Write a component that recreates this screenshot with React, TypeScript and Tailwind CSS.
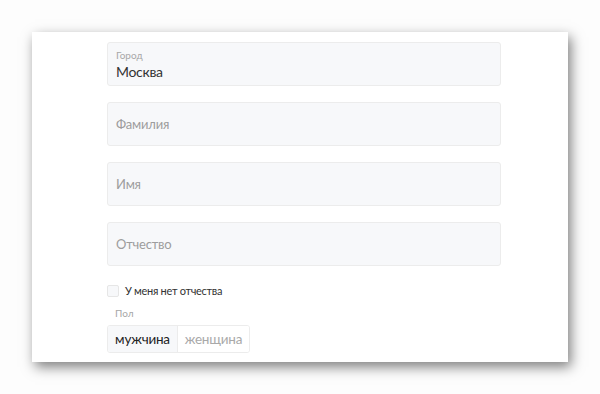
import type { ReactNode } from "react";

const font = { fontFamily: "Lato, Roboto, sans-serif" };

function Field({ placeholder }: { placeholder: string }) {
  return (
    <div className="flex h-[44px] w-[394px] items-center rounded-[3px] border border-[#ececec] bg-[#f7f8fa] px-[8px] pt-[1px]">
      <span className="text-[13px] tracking-[-0.2px] text-[#9d9d9d]">{placeholder}</span>
    </div>
  );
}

function Segment({ active, children }: { active?: boolean; children: ReactNode }) {
  return (
    <div
      className={
        active
          ? "flex h-full w-[69px] items-center justify-center bg-[#f7f8fa] text-[13.5px] tracking-[-0.2px] text-[#222]"
          : "flex h-full w-[72px] items-center justify-center border-l border-[#ececec] bg-white text-[13.5px] tracking-[-0.2px] text-[#a9a9a9]"
      }
    >
      {children}
    </div>
  );
}

export default function App() {
  return (
    <div className="h-[394px] w-[600px] bg-[#fdfdfd] pt-[32px] pl-[32px]" style={font}>
      <div className="h-[330px] w-[536px] bg-white pt-[10px] pl-[75px] shadow-[3px_5px_12px_rgba(0,0,0,0.5)]">
        <div className="flex flex-col gap-[16px]">
          <div className="flex h-[44px] w-[394px] flex-col justify-center rounded-[3px] border border-[#ececec] bg-[#f7f8fa] px-[8px] pt-[2px]">
            <div className="text-[10px] leading-[12px] text-[#a7a7a7]">Город</div>
            <div className="mt-[2px] text-[14px] leading-[18px] tracking-[-0.3px] text-[#333]">Москва</div>
          </div>
          <Field placeholder="Фамилия" />
          <Field placeholder="Имя" />
          <Field placeholder="Отчество" />
        </div>
        <div className="mt-[18px] flex items-center gap-[6px]">
          <div className="h-[12px] w-[12px] rounded-[2px] border border-[#e6e6e6] bg-[#f7f8fa]" />
          <span className="text-[11px] leading-[14px] tracking-[-0.3px] text-[#333]">У меня нет отчества</span>
        </div>
        <div className="mt-[9px] pl-[8px] text-[10px] leading-[12px] text-[#a7a7a7]">Пол</div>
        <div className="mt-[6px] flex h-[28px] w-fit overflow-hidden rounded-[3px] border border-[#ececec]">
          <Segment active>мужчина</Segment>
          <Segment>женщина</Segment>
        </div>
      </div>
    </div>
  );
}
